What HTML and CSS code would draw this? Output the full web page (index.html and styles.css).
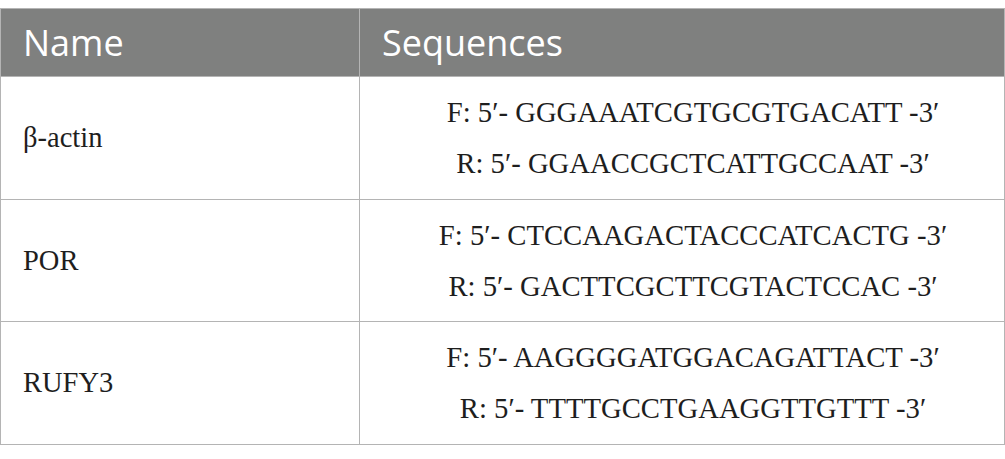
FILE: index.html
```html
<!DOCTYPE html>
<html>
<head>
<meta charset="utf-8">
<link rel="stylesheet" href="styles.css">
</head>
<body>
<table class="primers">
  <thead>
    <tr class="head-row">
      <th class="col-name">Name</th>
      <th class="col-seq">Sequences</th>
    </tr>
  </thead>
  <tbody>
    <tr class="row-a">
      <td class="cell-name">β-actin</td>
      <td class="cell-seq"><span class="line">F: 5′- GGGAAATCGTGCGTGACATT -3′</span><span class="line">R: 5′- GGAACCGCTCATTGCCAAT -3′</span></td>
    </tr>
    <tr class="row-b">
      <td class="cell-name">POR</td>
      <td class="cell-seq"><span class="line">F: 5′- CTCCAAGACTACCCATCACTG -3′</span><span class="line">R: 5′- GACTTCGCTTCGTACTCCAC -3′</span></td>
    </tr>
    <tr class="row-a">
      <td class="cell-name">RUFY3</td>
      <td class="cell-seq"><span class="line">F: 5′- AAGGGGATGGACAGATTACT -3′</span><span class="line">R: 5′- TTTTGCCTGAAGGTTGTTT -3′</span></td>
    </tr>
  </tbody>
</table>
</body>
</html>
```

FILE: styles.css
```css
html, body {
  background: #ffffff;
}
body {
  margin: 8px 0 0 0;
}
.primers {
  border-collapse: collapse;
  width: 1005px;
  table-layout: fixed;
}
.primers th,
.primers td {
  border: 1px solid #b4b4b4;
  padding: 0 0 0 22px;
  vertical-align: middle;
}
.head-row {
  height: 68px;
}
.head-row th {
  background: #7f807f;
  color: #ffffff;
  font-family: "Open Sans", "Noto Sans", sans-serif;
  font-weight: 400;
  font-size: 36px;
  text-align: left;
  line-height: 40px;
}
.col-name {
  width: 336px;
}
.row-a {
  height: 123px;
}
.row-b {
  height: 122px;
}
.cell-name {
  font-family: "Liberation Serif", "Times New Roman", serif;
  font-size: 28.5px;
  color: #1e1e1e;
  padding-top: 3px;
}
.cell-seq {
  font-family: "Liberation Serif", "Times New Roman", serif;
  font-size: 28.7px;
  color: #1e1e1e;
  text-align: center;
  padding: 18px 0 0 0;
}
.line {
  display: block;
  line-height: 51px;
}
```
